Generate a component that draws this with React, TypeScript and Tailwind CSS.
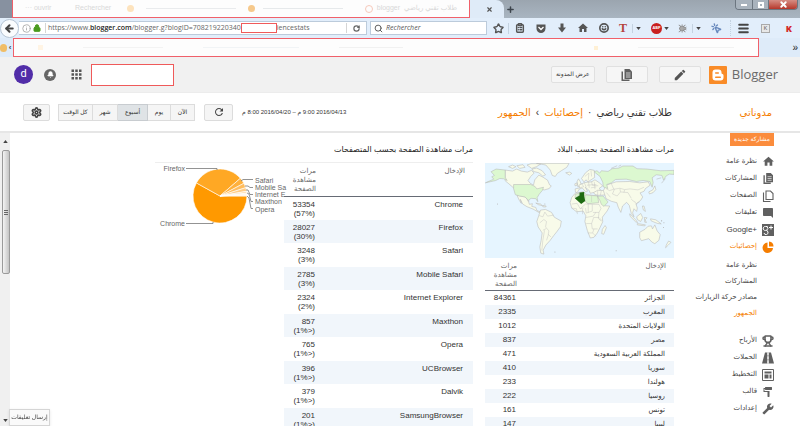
import React from "react";
import {
  ArrowLeft, Info, Lock, RotateCw, Search, Star, ClipboardList, Smile,
  Menu, Settings, Trophy, MousePointerClick, Bell, Plus, X, Bug,
} from "lucide-react";
import {
  MdHome, MdModeEdit, MdChatBubble, MdFormatPaint, MdBuild, MdRefresh, MdApps,
} from "react-icons/md";

const UI = "font-['Liberation_Sans','DejaVu_Sans',sans-serif]";
const SEGOE = "font-['Open_Sans','Noto_Sans',sans-serif]";

const countries: [string, string][] = [
  ["الجزائر", "84361"],
  ["المغرب", "2335"],
  ["الولايات المتحدة", "1012"],
  ["مصر", "837"],
  ["المملكة العربية السعودية", "471"],
  ["سوريا", "410"],
  ["هولندا", "233"],
  ["روسيا", "222"],
  ["تونس", "161"],
  ["ليبيا", "147"],
];

const browsers: [string, string, string][] = [
  ["Chrome", "53354", "(57%)"],
  ["Firefox", "28027", "(30%)"],
  ["Safari", "3248", "(3%)"],
  ["Mobile Safari", "2785", "(3%)"],
  ["Internet Explorer", "2324", "(2%)"],
  ["Maxthon", "857", "(<1%)"],
  ["Opera", "765", "(<1%)"],
  ["UCBrowser", "396", "(<1%)"],
  ["Dalvik", "379", "(<1%)"],
  ["SamsungBrowser", "201", "(<1%)"],
];

function Caret() {
  return (
    <svg viewBox="0 0 6 4" className="h-[3px] w-[5px]" fill="#444">
      <path d="M0 0h6L3 4z" />
    </svg>
  );
}

function TabStrip() {
  return (
    <div className="flex h-[18px] bg-linear-to-b from-[#9ba5af] to-[#a9b5c1]">
      <div className="w-3 shrink-0 bg-[#8791a0]" />
      <div className="flex w-[458px] shrink-0 items-center border-x border-b border-[#f0606a] bg-[#fdfdfd] px-3 text-[7px] text-[#d8d8d8]">
        <span className="w-[50px]">··· ouvrir</span>
        <span className="w-[52px]">Rechercher</span>
        <span className="size-[7px] rounded-sm bg-[#fde3bd]" />
        <span className="ml-3 h-px w-[90px] bg-[#e9ebed]" />
        <span className="ml-3 size-[7px] rounded-sm bg-[#f6c98c]" />
        <span className="ml-2 h-px w-[80px] bg-[#e6e9eb]" />
        <span className="ml-auto size-[8px] shrink-0 rounded-sm border border-[#f7c9bb]" />
        <span className="ml-[4px] shrink-0">blogger</span>
        <span dir="rtl" className="ml-[4px] shrink-0">طلاب تقني رياضي</span>
      </div>
      <button aria-label="Close tab" className="flex w-[34px] shrink-0 items-center justify-center rounded-tr-lg bg-[#dfebf8] pl-1">
        <X className="size-[7px]" stroke="#555" strokeWidth={4} />
      </button>
      <button aria-label="New tab" className="flex w-3 shrink-0 items-center justify-center">
        <Plus className="size-[9px]" stroke="#3d444c" strokeWidth={4} />
      </button>
      <div className="mr-[2px] ml-auto flex h-[10px] w-[63px] overflow-hidden rounded-b-sm border border-t-0 border-[#6c7680] text-white">
        <button aria-label="Minimize" className="flex w-[17px] items-center justify-center border-r border-[#6c7680] bg-[#a9b3bd]">
          <span className="h-[2px] w-[6px] bg-white" />
        </button>
        <button aria-label="Restore" className="flex w-[16px] items-center justify-center border-r border-[#6c7680] bg-[#a9b3bd]">
          <span className="size-[6px] border-2 border-white" />
        </button>
        <button aria-label="Close" className="flex flex-1 items-center justify-center bg-linear-to-b from-[#d58d84] to-[#b5352a]">
          <X className="size-[9px]" strokeWidth={5} />
        </button>
      </div>
    </div>
  );
}

function NavBar() {
  const cell = "flex w-[21px] shrink-0 items-center justify-center";
  return (
    <div className={`flex h-5 items-center bg-[#e2eefb] ${SEGOE}`}>
      <button aria-label="Back" className="flex size-[19px] shrink-0 items-center justify-center rounded-full border border-[#b7c5d4] bg-[#fafcfe]">
        <ArrowLeft className="size-[11px]" stroke="#444" strokeWidth={4.5} />
      </button>
      <div className="flex h-[14px] w-[348px] shrink-0 items-center border border-l-0 border-[#bccbdb] bg-white pl-[3px] text-[7px] text-[#666]">
        <Info className="size-[9px] shrink-0" stroke="#999" />
        <Lock className="ml-[2px] size-[8px] shrink-0" stroke="#4a9b1e" fill="#4a9b1e" strokeWidth={3} />
        <span className="ml-1 h-[10px] w-px bg-[#d5d5d5]" />
        <div role="textbox" aria-label="Address" className="ml-[2px] flex items-center whitespace-nowrap">
          <span>https://www.<span className="font-semibold text-[#222]">blogger.com</span>/blogger.g?blogID=708219220340</span>
          <span className="h-[10px] w-[36px] shrink-0 border border-[#ef5a5a] bg-white" />
          <span>iencestats</span>
        </div>
        <span className="ml-auto h-[10px] w-px bg-[#d5d5d5]" />
        <button aria-label="Reload" className="flex w-[19px] shrink-0 items-center justify-center">
          <RotateCw className="size-[7px]" stroke="#666" strokeWidth={4} />
        </button>
      </div>
      <label className="ml-[3px] flex h-[14px] w-[117px] shrink-0 items-center border border-[#bccbdb] bg-white pl-[3px]">
        <Search className="size-[9px] shrink-0" stroke="#555" strokeWidth={2.5} />
        <input aria-label="Search" placeholder="Rechercher" className="ml-[3px] w-full min-w-0 text-[7px] italic outline-none placeholder:text-[#555]" />
      </label>
      <div className="ml-[2px] flex min-w-0 flex-1 items-center">
        <button aria-label="Bookmark" className="flex w-5 shrink-0 items-center justify-center border-r border-[#c4d2e0]"><Star className="size-[11px]" stroke="#555" strokeWidth={3} /></button>
        <button aria-label="Library" className={cell}><ClipboardList className="size-[10px]" stroke="#555" strokeWidth={3.5} /></button>
        <button aria-label="Pocket" className={cell}>
          <svg viewBox="0 0 20 18" className="h-[9px] w-[10px]"><path d="M1 1h18v8a9 9 0 0 1-18 0z" fill="#555" /><path d="M5 6l5 5 5-5" stroke="#fff" strokeWidth="2.6" fill="none" /></svg>
        </button>
        <button aria-label="Downloads" className={cell}>
          <svg viewBox="0 0 16 20" className="h-[10px] w-[8px]" fill="#555"><path d="M5 1h6v8h5l-8 10-8-10h5z" /></svg>
        </button>
        <button aria-label="Home" className={cell}><MdHome className="size-[12px]" color="#555" /></button>
        <button aria-label="Chat" className={cell}><Smile className="size-[10px]" stroke="#555" strokeWidth={4} /></button>
        <button aria-label="Text tool" className="w-[18px] shrink-0 text-center font-['Liberation_Serif'] text-[12px] leading-3 font-bold text-[#b5433b]">T</button>
        <button aria-label="Text tool options" className="flex h-[9px] w-3 shrink-0 items-center justify-center border-l border-[#c4d2e0]"><Caret /></button>
        <button aria-label="Ad blocker" className="ml-[7px] flex shrink-0 items-center gap-[2px]">
          <span className="flex size-[11px] items-center justify-center rounded-full bg-[#c92020] text-[4px] font-bold text-white">ABP</span>
          <Caret />
        </button>
        <button aria-label="Debugger" className="ml-[9px] flex shrink-0 items-center"><Bug className="size-[9px] rotate-90" stroke="#888" fill="#aaa" /></button>
        <button aria-label="Debugger options" className="ml-[5px] flex h-[9px] w-3 shrink-0 items-center justify-center border-l border-[#c4d2e0]"><Caret /></button>
        <button aria-label="Selector" className="ml-[7px] flex shrink-0"><MousePointerClick className="size-[11px]" stroke="#6889bd" strokeWidth={3} /></button>
        <button aria-label="Menu" className="ml-auto flex h-4 w-[27px] shrink-0 items-center justify-center border-l border-dotted border-[#c4d2e0]"><Menu className="size-[13px]" stroke="#444" strokeWidth={3.5} /></button>
        <button aria-label="Keyboard" className="ml-[4px] flex size-[9px] shrink-0 items-center justify-center border border-[#aaa] bg-[#e8e8e8] text-[6px] leading-none text-[#555]">K</button>
        <button aria-label="Kaspersky" className="mr-2 ml-4 shrink-0 text-[9px] leading-none font-extrabold text-[#d42a2a]">K</button>
      </div>
    </div>
  );
}

function BookmarkBar() {
  return (
    <div className="flex h-[19px] items-center bg-[#deebf9] pr-[2px]">
      <span className="h-[8px] w-[7px] shrink-0 rounded-sm bg-[#f0bd66]" />
      <span className="w-[6px] shrink-0 text-center text-[8px] font-bold text-[#444]">‹</span>
      <div className="flex h-[19px] flex-1 items-center gap-10 border border-[#f0606a] bg-[#fdfdfd] px-6">
        <span className="size-[5px] bg-[#fff4e4]" />
        <span className="h-px w-20 bg-[#f3f3f3]" />
        <span className="h-px w-24 bg-[#f1f4f6]" />
        <span className="h-px w-16 bg-[#f1f1f1]" />
        <span className="ml-auto size-[4px] bg-[#fff0d4]" />
        <span className="h-px w-24 bg-[#f2f2f2]" />
      </div>
      <button aria-label="More bookmarks" className="w-[39px] text-right text-[10px] leading-none text-[#222]">»</button>
    </div>
  );
}

function Header() {
  const btn = "flex h-[17px] items-center justify-center rounded-xs border border-[#e0e0e0] bg-[#f6f6f6]";
  return (
    <header className="flex h-9 shrink-0 items-center border-b border-[#ececec] bg-[#f1f1f1] pr-[22px] pl-[14px]">
      <button className="flex size-[19px] items-center justify-center rounded-full bg-[#512da8] font-['Roboto'] text-[11px] text-white">d</button>
      <button aria-label="Notifications" className="ml-[11px] flex size-3 items-center justify-center rounded-full bg-[#666]">
        <Bell className="size-[7px]" stroke="#fff" fill="#fff" />
      </button>
      <button aria-label="Apps" className="ml-[13px]"><MdApps className="size-[15px]" color="#555" /></button>
      <span className="ml-[7px] h-[22px] w-[83px] border border-[#ef5a5a] bg-white" />
      <button dir="rtl" className={`${btn} ml-auto w-11 text-[6px] text-[#333]`}>عرض المدونة</button>
      <button aria-label="Posts" className={`${btn} ml-[11px] w-[42px]`}><PostsIcon big /></button>
      <button aria-label="New post" className={`${btn} ml-[11px] w-[42px]`}><MdModeEdit className="size-[14px]" color="#555" /></button>
      <a href="#home" className={`ml-[8px] flex items-center text-[13px] leading-none text-[#6a6a6a] ${SEGOE}`}>
        <svg viewBox="0 0 36 36" className="mr-[5px] size-[18px]">
          <rect width="36" height="36" rx="2" fill="#f98b27" />
          <path d="M13 7h6q6 0 6 6v1q0 2 2 2 2 0 2 3v4q0 6-6 6H13q-6 0-6-6V13q0-6 6-6z" fill="#fff" />
          <path d="M13.500 14h5M13.500 22.500h9" stroke="#f98b27" strokeWidth="3.200" strokeLinecap="round" />
        </svg>
        Blogger
      </a>
    </header>
  );
}

function PostsIcon({ big = false }: { big?: boolean }) {
  return (
    <svg viewBox="0 0 22 24" className={big ? "h-3 w-[11px]" : "h-[11px] w-[10px]"} fill="#606060">
      <path d="M7 0h10l5 5v15H7z" />
      <path d="M1 5h3v16h13v3H1z" />
      <path d="M10 8h9M10 12h9M10 16h9" stroke="#f4f4f4" strokeWidth="1.500" />
    </svg>
  );
}

function Toolbar() {
  const ranges = ["الآن", "يوم", "أسبوع", "شهر", "كل الوقت"];
  const widths = ["w-[24px]", "w-[23px]", "w-[30px]", "w-[25px]", "w-[35px]"];
  const box = "flex h-[17px] items-center justify-center border border-[#dcdcdc] bg-[#f5f5f5]";
  return (
    <div dir="rtl" className="flex h-10 shrink-0 items-center border-b-2 border-[#e6e6e6] bg-white pr-7 pl-[23px] text-[#333]">
      <a href="#blogs" className="w-[100px] shrink-0 text-[10px] text-[#f57d00]">مدوناتي</a>
      <nav className="flex items-center gap-[5px] text-[10px] whitespace-nowrap">
        <span>طلاب تقني رياضي</span>
        <span>·</span>
        <a href="#stats" className="text-[#f57d00]">إحصائيات</a>
        <span>›</span>
        <a href="#audience" className="text-[#f57d00]">الجمهور</a>
      </nav>
      <span className="mr-auto text-[6px] whitespace-nowrap">2016/04/13 9:00 م – 2016/04/20 8:00 م</span>
      <button aria-label="تحديث" className={`${box} mr-[9px] w-[29px] rounded-xs`}><MdRefresh className="size-3" color="#444" /></button>
      <div className="mr-[9px] flex">
        {ranges.map((r, i) => (
          <button key={r} aria-pressed={i === 2} className={`flex h-[17px] items-center justify-center border border-l-0 text-[6px] last:border-l ${widths[i]} ${i === 2 ? "border-[#c8ccd0] bg-[#dfe3e6]" : "border-[#dcdcdc] bg-[#f5f5f5]"}`}>{r}</button>
        ))}
      </div>
      <button aria-label="الإعدادات" className={`${box} mr-2 w-[27px] rounded-xs`}><Settings className="size-[11px]" stroke="#444" strokeWidth={3.5} /></button>
    </div>
  );
}

function WorldMap() {
  const land = "#f8fbe9";
  const green = "#dcf8d0";
  return (
    <svg viewBox="35 100 562 281" className="block w-full bg-[#e6f5ff]" role="img" aria-label="خريطة العالم" stroke="#b5b5b5" strokeWidth="1.600" strokeLinejoin="round">
      <g fill={land}>
        <path d="M95 121l22 3 12-6 14 6 18 3 12-5 8 8-10 10-8 12 6 8 10 6 4-16 12-14 12 6 14 9 6 14 5 3-6 8-14 4-12-2-10 8-5-8-10-4H120l-14-12-11-9z" />
        <path d="M105 111l12-5 10 5-10 5zM130 108l18-3 6 8-16 3zM160 106l12-4 30 0-14 9-14 5zM175 118l14-3 16 8 10 12-8 4-12-10-16-4z" />
        <path d="M188 101h97l-7 12-16 10-12 8-6 9-9-3-6-16-13-15z" />
        <path d="M130 196l25 5 9 12 3 10 9-2-2 8 12 3 3 9 11 5-5 1-17-10-18-7-13-8-7-14 3 12-6-9z" />
        <path d="M186 219l14 3 6 5-12-3zM207 226l10 2-2 3-8-1z" />
        <path d="M200 240l15-2 18 9 8 14 21 12-3 17-11 15-8 10-12 16-12 13-8 15 2 12-9-3-3-18 4-20 3-22-12-18-4-16 6-18z" />
        <path d="M275 129l12-2 6 4-7 5zM309 155l4-8 5 8 4 12-11 4zM302 162l6-3 1 7-6 2z" />
        <path d="M322 146l12-17 13-10 13 3 1 21-14 9-6 5-5-7-7 6z" />
        <path d="M304 187l-1-10 14-3-3-8 18-8 20-2 10-6 12 8 11 10-11 8 5 4-8 6-14 2-9 2-3-8-12-10 7 12-5 2-11-12-9 4-6 10z" />
        <path d="M358 188l12-7 18 1 10 5-4 8-22 1-10-2z" />
        <path d="M303 190l25-5 8 9 36 4 7 12 11 17 16 1-8 15-14 18 1 14-8 17-8 16-10 13-11 2-9-23-7-26 3-17-8-14-20 2-14-11-5-16 5-16z" />
        <path d="M384 297l8-11 4 6-8 20-6-2z" />
        <path d="M387 182l8-16 30-10 40-1 30 4 25-3 6 10-14 10-4 8-12 5 8 12-6 10-14 11 4 12-2 10-8-8-4 12 4 12-8-10-6-24-8-9-12 11-5 19-8-16-4-13-16-4-16-8z" />
        <path d="M522 186l12-6 6-12 3 11-8 9-11 4zM465 251l18 18 6 8-6-2-16-16zM486 260l12-10 6 12-6 12-10-6zM488 280l24 4-2 3-22-3zM509 262l8 1-6 6 4 8-5-1zM503 228l5 0 4 16-6-4zM527 266l16 3 16 12-10-1-8-3-12-5z" />
        <path d="M495 306l16-9 9-9 10-1 3 9 7-12 7 18 9 11-4 17-12 10-9-5-9-10-22 6-5-9zM581 332l7 4-8 8-8 8 2-8z" />
      </g>
      <g fill={green}>
        <path d="M53 126l15-8 27 3v22l6 9-10-5-12-1-12 6-31 7 25-11-6-7 8-4z" />
        <path d="M120 164h51l13 6 5 7 20-5-3 9-10 12-6 10 2 12-6-9-14-1-8 6-10-10-17-3-12-4-5-18z" />
        <path d="M359 126l9-3 8 7 5-7 20 2 12-8 20-2 12-6 30 0 12 8 30 1 40 5 40-1v12l-14-1-10 6-7 12-5-14-17-2-12 9 3 14-3 14-7-17-20-3-20 3-30-7-32 1-12 10-14 5 3 12-13-5-2-14-8-17z" />
        <path d="M332 195l38 3 3 20-32 3-9-8zM369 199l17-1 15 18-12 13-8-6-4-11zM303 194l12-5 0 8-12 7z" />
      </g>
      <path d="M302 205l14-8v-9l14-2v12l3 15-12 9z" fill="#1d6b12" stroke="none" />
      <g fill="none" stroke="#bebebe" strokeWidth="1.300">
        <path d="M293 222l16-2 9 16 16-14 20 1 0 20-18 6-2-15M310 252l-3-16-15-2M354 223l20 0 6 12-6 12-18 0M335 262l22-4 8-12M336 280h16l2 16h16M352 280l6-18 16 0 9 10M340 308h15l4-12M355 308l10 10M374 247l-2 18 9 8M325 236v16M342 220v28M318 236l10-2" />
        <path d="M410 160l8 18 18-3 14 4 16-2 24 3 18-8M420 178l-6 14 14 6M436 176l2 10-10 12M438 186l22 2 10 17M450 180l-2 8M395 176l10 6 13-4M396 188l12 14M352 198v18" />
        <path d="M195 256l12 4 6-14M213 246l8 12 18-3M198 278l12-10 8 6-3 16 10 12-2 10 8 8M207 300l10-5M212 300l-5 30-3 30M224 312l-6 18M160 212l8 1" />
        <path d="M330 158l6 14M343 156l2 18M352 154l2 12 18 2M338 166l28-2M350 174l16-3M360 156l2 22M317 174l12-4M322 160l6 10M332 140l12-10-2 22M350 122l2 18M370 182v14M381 182l-3 14" />
        <path d="M470 208l10 8M480 214l6 10M486 220l8-4" />
      </g>
      <g fill="#b0b0b0" stroke="none">
        <circle cx="72" cy="222" r="1.500" /><circle cx="243" cy="365" r="1.500" /><circle cx="425" cy="361" r="1.500" /><circle cx="566" cy="292" r="1.500" /><circle cx="213" cy="222" r="1.500" /><circle cx="560" cy="272" r="2" /><circle cx="567" cy="278" r="1.500" />
      </g>
      <path d="M410 116l18-8M432 110l8-4M545 148l14-4M560 160l12-14" stroke="#b5b5b5" fill="none" />
    </svg>
  );
}

const slices: [number, number, string][] = [
  [0, 209, "#ff9900"],
  [209, 319, "#ffa824"],
  [319, 332, "#ffb13d"],
  [332, 342, "#ffbd5e"],
  [342, 350, "#ffcc85"],
  [350, 354, "#ffdcab"],
  [354, 357, "#ffe8cb"],
  [357, 360, "#fff1e0"],
];

function BrowserPie() {
  const cx = 65;
  const cy = 33;
  const r = 27;
  const pt = (a: number) => `${cx + r * Math.cos((a * Math.PI) / 180)} ${cy + r * Math.sin((a * Math.PI) / 180)}`;
  return (
    <svg viewBox="0 0 129 70" className="h-[70px] w-[129px] overflow-visible" role="img" aria-label="حصص المتصفحات">
      {slices.map(([a, b, color]) => (
        <path key={a} d={`M${cx} ${cy}L${pt(a)}A${r} ${r} 0 ${b - a > 180 ? 1 : 0} 1 ${pt(b)}Z`} fill={color} stroke="#fff" strokeWidth="0.600" />
      ))}
      <g fill="none" stroke="#777" strokeWidth="0.800">
        <path d="M31 5.500H62V7M31 60.500H58V59M86 18l2-1.500h10M90 23l3 0 2 1.500h3M91 27l2 0 2 4.500h3M92 30l2 1 2 7.500h2M92 33l2 2 2 10.500h2" />
      </g>
      <g fill="#666" className="text-[7px]" direction="ltr">
        <text x="30" y="8" textAnchor="end">Firefox</text>
        <text x="30" y="63" textAnchor="end">Chrome</text>
        <text x="100" y="20">Safari</text>
        <text x="100" y="27">Mobile Sa</text>
        <text x="100" y="34">Internet E</text>
        <text x="100" y="41">Maxthon</text>
        <text x="100" y="49">Opera</text>
      </g>
    </svg>
  );
}

function HeadRow({ pad }: { pad: string }) {
  return (
    <thead>
      <tr className="h-[33px] border-b border-[#666b75] align-top text-[7px] leading-[9px] text-[#666]">
        <th scope="col" className={`pt-[3px] text-start font-normal ${pad}`}>الإدخال</th>
        <th scope="col" className="w-[34px] pt-[3px] pr-[2px] text-start font-normal">
          <span className="block">مرات</span>
          <span className="block">مشاهدة</span>
          <span className="block">الصفحة</span>
        </th>
      </tr>
    </thead>
  );
}

function Countries() {
  return (
    <section className="w-[189px] shrink-0">
      <h2 className="flex h-[30px] items-center pt-1 text-[8px] text-[#222]">مرات مشاهدة الصفحة بحسب البلاد</h2>
      <WorldMap />
      <table className="w-full table-fixed border-collapse text-[#333]">
        <HeadRow pad="pr-2" />
        <tbody>
          {countries.map(([name, n]) => (
            <tr key={name} className="h-[14px] even:bg-[#f1f6fb]">
              <td className="pr-[9px] text-[7px] leading-[9px]">{name}</td>
              <td className="pr-[3px] text-[8px] leading-[9px]">{n}</td>
            </tr>
          ))}
        </tbody>
      </table>
    </section>
  );
}

function Browsers() {
  return (
    <section className="mr-3 w-[318px] shrink-0">
      <h2 className="flex h-[30px] items-center border-b border-[#eee] pt-1 text-[8px] text-[#222]">مرات مشاهدة الصفحة بحسب المتصفحات</h2>
      <div className="flex items-start">
        <table className="w-[189px] table-fixed border-collapse text-[8px] leading-[9px] text-[#333]">
          <HeadRow pad="pr-2" />
          <tbody>
            {browsers.map(([name, n, pct]) => (
              <tr key={name} className="h-6 align-top even:h-[23px] even:bg-[#f1f6fb]">
                <td className="pt-[3px] pr-[10px]">{name}</td>
                <td className="pt-[3px] pr-[3px]">
                  <span className="block">{n}</span>
                  <span className="block">{pct}</span>
                </td>
              </tr>
            ))}
          </tbody>
        </table>
        <BrowserPie />
      </div>
    </section>
  );
}

function Item({ icon, label, active = false, ltr = false }: { icon: React.ReactNode; label: string; active?: boolean; ltr?: boolean }) {
  return (
    <a href="#item" className={`flex h-[17px] items-center ${active ? "text-[#f57d00]" : "text-[#444]"}`}>
      <span className={`flex w-3 justify-center ${active ? "" : "text-[#606060]"}`}>{icon}</span>
      <span dir={ltr ? "ltr" : "rtl"} className={`mr-[5px] whitespace-nowrap ${ltr ? "text-[8px]" : ""}`}>{label}</span>
    </a>
  );
}

function Sidebar() {
  const sub = "flex h-4 items-center pr-[17px] whitespace-nowrap";
  const icon = "size-3 shrink-0";
  return (
    <nav className="w-[126px] shrink-0 pr-[26px] text-[7px] text-[#444]">
      <button className="block h-[13px] w-11 bg-[#fb8c3c] text-center text-[6px] leading-[9px] text-white">مشاركة جديدة</button>
      <div className="mt-[7px]">
        <Item icon={<MdHome className="size-[13px] shrink-0" />} label="نظرة عامة" />
        <Item icon={<PostsIcon />} label="المشاركات" />
        <Item
          icon={
            <svg viewBox="0 0 24 24" className={icon} fill="none" stroke="currentColor" strokeWidth="2.200">
              <path d="M8 2h9l5 5v12H8z" />
              <path d="M3 5v18h14" />
            </svg>
          }
          label="الصفحات"
        />
        <Item icon={<MdChatBubble className={`${icon} -scale-x-100`} />} label="تعليقات" />
        <Item
          ltr
          icon={
            <svg viewBox="0 0 24 24" className={icon}>
              <rect width="24" height="24" fill="#606060" />
              <path d="M11 5H7a4 4 0 1 0 2 7l3 4a4 4 0 1 1-8 2M10 5q4 4-1 8" stroke="#fff" strokeWidth="2" fill="none" />
              <path d="M18 3v8M14 7h8" stroke="#fff" strokeWidth="2" />
            </svg>
          }
          label="Google+"
        />
        <Item
          active
          icon={
            <svg viewBox="0 0 24 24" className={icon} fill="currentColor">
              <path d="M11 3v11h11A10.500 10.500 0 1 1 11 3z" />
              <path d="M14 1a10 10 0 0 1 9 10h-9z" />
            </svg>
          }
          label="إحصائيات"
        />
      </div>
      <div className="mt-[2px]">
        <a href="#overview" className={sub}>نظرة عامة</a>
        <a href="#posts" className={sub}>المشاركات</a>
        <a href="#traffic" className={sub}>مصادر حركة الزيارات</a>
        <a href="#audience" className={`${sub} text-[#f57d00]`}>الجمهور</a>
      </div>
      <div className="mt-[11px]">
        <Item icon={<Trophy className={icon} strokeWidth={3} />} label="الأرباح" />
        <Item icon={<svg viewBox="0 0 24 24" className={icon} fill="currentColor"><path d="M6 1h5v22H0zM13 1h5l6 22H13z" /><path d="M12 2v4M12 9v5M12 17v5" stroke="#fff" strokeWidth="2" /></svg>} label="الحملات" />
        <Item
          icon={
            <svg viewBox="0 0 24 24" className={icon} fill="currentColor">
              <path d="M1 1h22v22H1z" fill="none" stroke="currentColor" strokeWidth="2" />
              <path d="M5 5h14v4H5zM5 11h8v8H5zM15 11h4v8h-4z" />
            </svg>
          }
          label="التخطيط"
        />
        <Item icon={<MdFormatPaint className={`${icon} -scale-x-100`} />} label="قالب" />
        <Item icon={<MdBuild className={`${icon} -scale-x-100`} />} label="إعدادات" />
      </div>
    </nav>
  );
}

function ScrollBar() {
  return (
    <div className="flex w-[10px] shrink-0 flex-col items-center bg-[#f0f0f0] pl-px" aria-hidden="true">
      <div className="flex h-[17px] items-center"><span className="rotate-180"><Caret /></span></div>
      <div className="flex h-[124px] w-[8px] flex-col items-center justify-center gap-px rounded-xs border border-[#9a9a9a] bg-linear-to-r from-[#f4f4f4] to-[#c4c4c4]">
        <span className="h-px w-1 bg-[#666]" />
        <span className="h-px w-1 bg-[#666]" />
        <span className="h-px w-1 bg-[#666]" />
      </div>
      <div className="mt-auto flex h-3 items-center"><Caret /></div>
    </div>
  );
}

export default function App() {
  return (
    <div className={`flex h-screen flex-col overflow-hidden bg-white ${UI}`}>
      <div className="shrink-0">
        <TabStrip />
        <NavBar />
        <BookmarkBar />
      </div>
      <Header />
      <Toolbar />
      <div dir="rtl" className="flex min-h-0 flex-1">
        <main className="flex min-w-0 flex-1 overflow-hidden">
          <Sidebar />
          <Countries />
          <Browsers />
        </main>
        <ScrollBar />
      </div>
      <button dir="rtl" className="fixed bottom-0 left-[9px] h-[17px] w-[41px] border border-[#d5d5d5] bg-[#fafafa] text-[6px] whitespace-nowrap text-[#444] shadow">إرسال تعليقات</button>
    </div>
  );
}
